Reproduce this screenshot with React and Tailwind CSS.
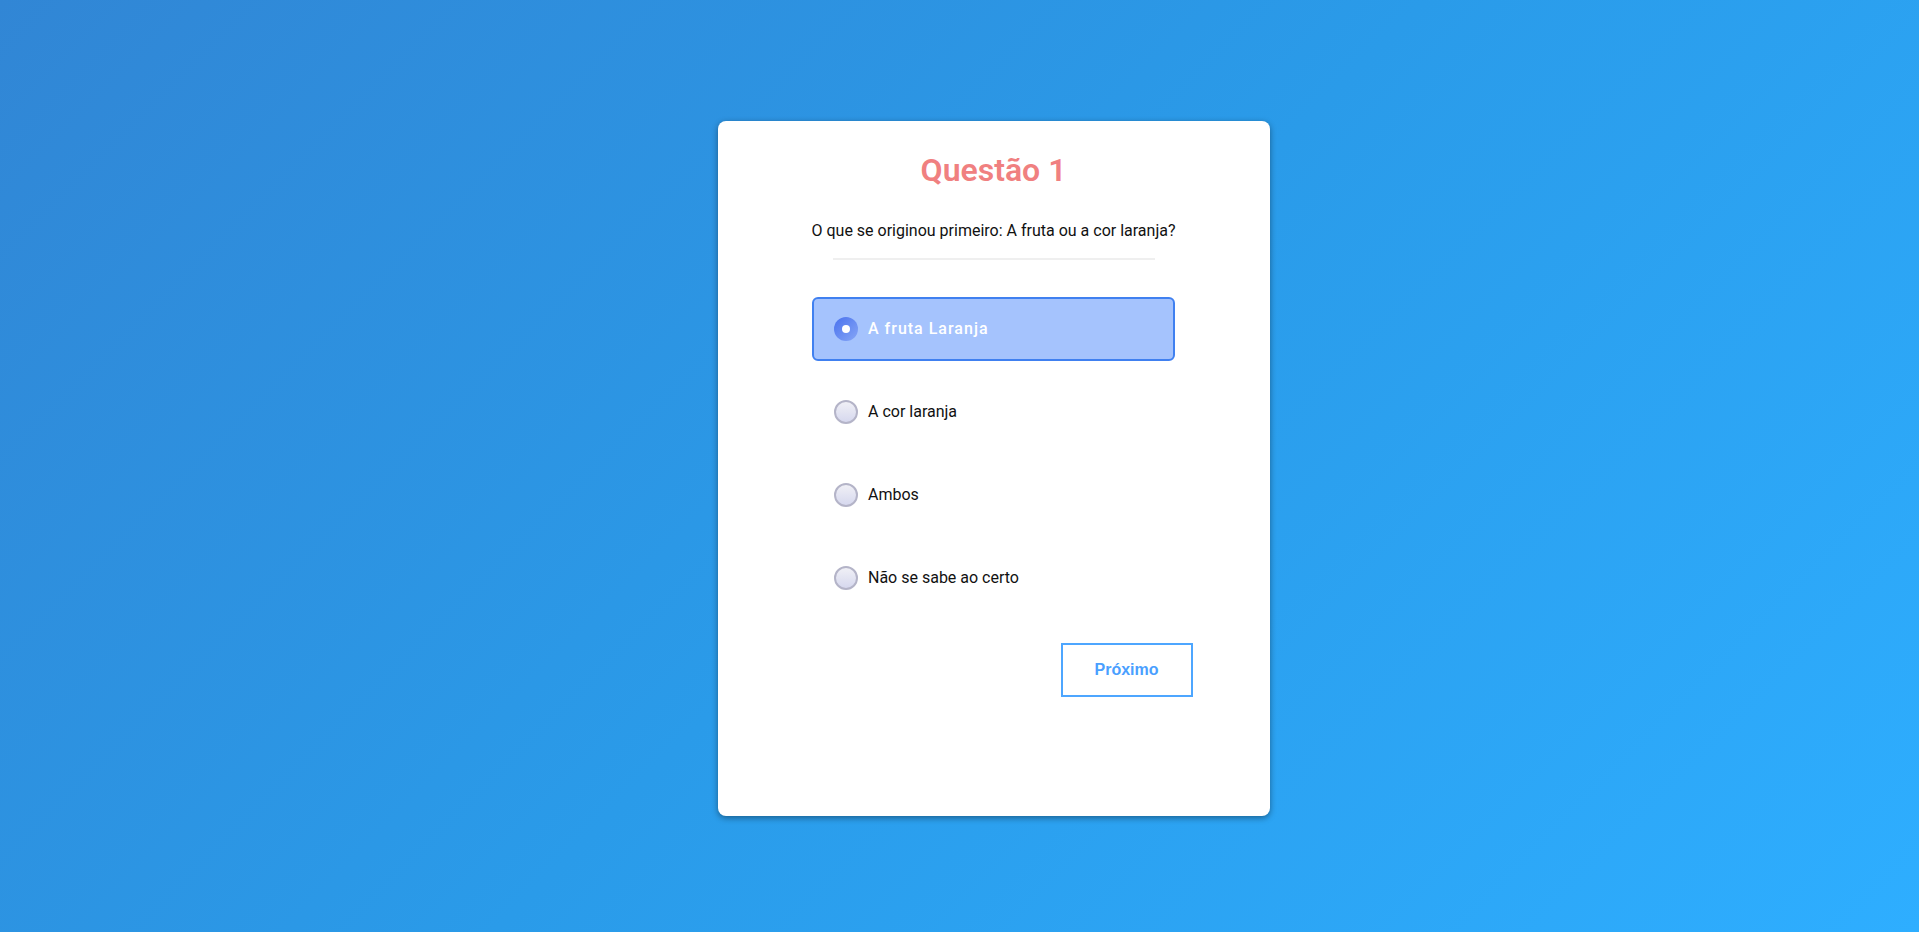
import React, {useState} from "react";

export default function App() {
    const options = [
        "A fruta Laranja",
        "A cor laranja",
        "Ambos",
        "Não se sabe ao certo",
    ];
    const [selected, setSelected] = useState(0);

    return (
        <div
            className="min-h-screen w-full flex justify-center pt-[121px] bg-[linear-gradient(135deg,#3186d5_0%,#2a9be9_50%,#2eaeff_100%)]"
            style={{fontFamily: "Roboto, 'Liberation Sans', sans-serif"}}
        >
            <div className="ml-[68px] w-[552px] h-[695px] bg-white rounded-lg shadow-[0_2px_6px_rgba(0,0,0,0.4)] flex flex-col items-center pt-[30px]">
                <h2 className="text-[32px] leading-[38px] font-semibold text-[#f08080]">Questão 1</h2>
                <p className="mt-[30px] text-base leading-6 text-[#111]">
                    O que se originou primeiro: A fruta ou a cor laranja?
                </p>
                <div className="mt-[15px] w-[322px] h-[2px] bg-[#efefef]"/>

                {/* opções */}
                <div className="mt-[37px] w-[363px] flex flex-col gap-[19px]">
                    {options.map((opt, i) => {
                        const active = i === selected;
                        return (
                            <label
                                key={opt}
                                onClick={() => setSelected(i)}
                                className={
                                    active
                                        ? "h-16 flex items-center gap-[10px] pl-[20px] rounded-md border-2 border-[#4080f0] bg-[#a5c3fd] cursor-pointer"
                                        : "h-16 flex items-center gap-[10px] pl-[20px] rounded-md border-2 border-transparent cursor-pointer"
                                }
                            >
                                {active ? (
                                    <span className="w-6 h-6 rounded-full bg-[linear-gradient(135deg,#4a72ee,#86a6f6)] flex items-center justify-center">
                                        <span className="w-2 h-2 rounded-full bg-white"/>
                                    </span>
                                ) : (
                                    <span className="w-6 h-6 rounded-full border-2 border-[#b4b4c8] bg-[linear-gradient(180deg,#f0f0f6,#d6d8ee)]"/>
                                )}
                                <span
                                    className={
                                        active
                                            ? "text-base font-medium tracking-[1px] text-white"
                                            : "text-base text-[#111]"
                                    }
                                >
                                    {opt}
                                </span>
                            </label>
                        );
                    })}
                </div>

                <div className="w-full flex justify-end pr-[77px] mt-[33px]">
                    <button
                        className="w-[132px] h-[54px] border-2 border-[#4da6ff] text-[#4a9fff] text-base font-bold bg-white"
                        style={{fontFamily: "'Liberation Sans', Arial, sans-serif"}}
                    >
                        Próximo
                    </button>
                </div>
            </div>
        </div>
    );
}
